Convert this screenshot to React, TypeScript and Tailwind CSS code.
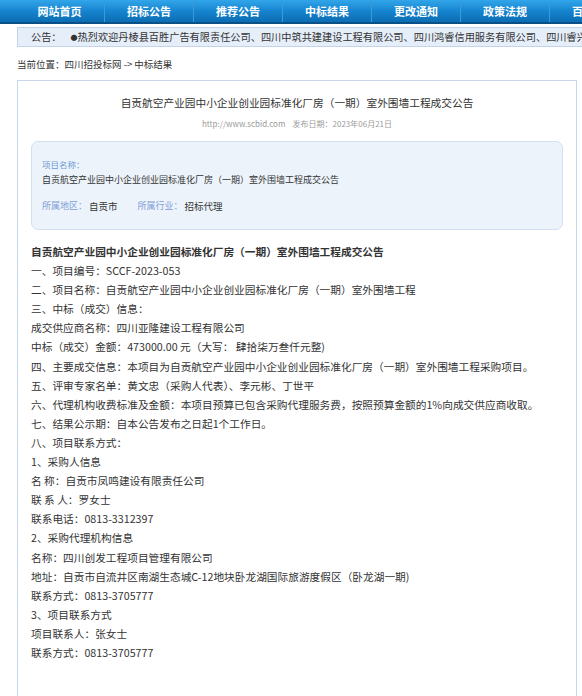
import React from "react";

const navItems = ["网站首页", "招标公告", "推荐公告", "中标结果", "更改通知", "政策法规", "百科知识"];

const body: { t: string; b?: boolean }[] = [
  { t: "自贡航空产业园中小企业创业园标准化厂房（一期）室外围墙工程成交公告", b: true },
  { t: "一、项目编号：SCCF-2023-053" },
  { t: "二、项目名称：自贡航空产业园中小企业创业园标准化厂房（一期）室外围墙工程" },
  { t: "三、中标（成交）信息：" },
  { t: "成交供应商名称：四川亚隆建设工程有限公司" },
  { t: "中标（成交）金额：473000.00 元（大写： 肆拾柒万叁仟元整)" },
  { t: "四、主要成交信息：本项目为自贡航空产业园中小企业创业园标准化厂房（一期）室外围墙工程采购项目。" },
  { t: "五、评审专家名单：黄文忠（采购人代表）、李元彬、丁世平" },
  { t: "六、代理机构收费标准及金额：本项目预算已包含采购代理服务费，按照预算金额的1%向成交供应商收取。" },
  { t: "七、结果公示期：自本公告发布之日起1个工作日。" },
  { t: "八、项目联系方式：" },
  { t: "1、采购人信息" },
  { t: "名 称：自贡市凤鸣建设有限责任公司" },
  { t: "联 系 人：罗女士" },
  { t: "联系电话：0813-3312397" },
  { t: "2、采购代理机构信息" },
  { t: "名称：四川创发工程项目管理有限公司" },
  { t: "地址：自贡市自流井区南湖生态城C-12地块卧龙湖国际旅游度假区（卧龙湖一期)" },
  { t: "联系方式：0813-3705777" },
  { t: "3、项目联系方式" },
  { t: "项目联系人：张女士" },
  { t: "联系方式：0813-3705777" },
];

export default function App() {
  return (
    <div
      className="w-[582px] h-[696px] overflow-hidden bg-white text-[#333]"
      style={{ fontFamily: '"Noto Sans CJK SC", "Noto Sans", sans-serif' }}
    >
      {/* nav */}
      <div className="h-[24px] w-full bg-gradient-to-b from-[#32a6ea] via-[#1684cf] to-[#0b6db3] border-b-[2px] border-[#0a4f85] flex pl-[15px] overflow-hidden">
        {navItems.map((n, i) => (
          <div
            key={n}
            className={`shrink-0 w-[89px] h-full flex items-center justify-center text-white font-bold text-[11px] leading-none ${
              i > 0 ? "border-l border-l-[#3b9ad8]" : ""
            }`}
          >
            {n}
          </div>
        ))}
      </div>

      {/* announcement */}
      <div className="mt-[3px] ml-[17px] h-[20px] bg-[#e5eef9] border border-[#c3d4ea] border-r-0 flex items-center pl-[13px] text-[10.2px] whitespace-nowrap overflow-hidden">
        <span>公告：</span>
        <span className="ml-[9px] text-[7px]">●</span>
        <span>热烈欢迎丹棱县百胜广告有限责任公司、四川中筑共建建设工程有限公司、四川鸿睿信用服务有限公司、四川睿兴乾达建设工程有限公司</span>
      </div>

      {/* breadcrumb */}
      <div className="ml-[17px] mt-[10px] h-[14px] text-[9.5px] leading-[14px] whitespace-nowrap">
        当前位置：四川招投标网 -&gt; 中标结果
      </div>

      {/* main box */}
      <div className="ml-[17px] mt-[9px] w-[560px] h-[620px] border border-[#c8d6ea] border-b-0">
        <div className="pt-[12px] text-center text-[10.7px] leading-[20px]">
          自贡航空产业园中小企业创业园标准化厂房（一期）室外围墙工程成交公告
        </div>
        <div className="mt-[4px] text-center text-[8px] leading-[14px] text-[#9a9a9a]">
          http://www.scbid.com&nbsp;&nbsp;&nbsp;&nbsp;发布日期：2023年06月21日
        </div>

        <div className="mx-[13px] mt-[10px] h-[89px] w-[532px] rounded-[7px] border border-[#d2e0f1] bg-[#edf3fb] px-[10px] pt-[15px]">
          <div className="text-[8.5px] leading-[14px] text-[#6e9bd3]">项目名称：</div>
          <div className="mt-[1px] text-[9px] leading-[16px]">
            自贡航空产业园中小企业创业园标准化厂房（一期）室外围墙工程成交公告
          </div>
          <div className="mt-[10px] text-[9px] leading-[16px] flex">
            <span className="text-[#7d9fd6]">所属地区：</span>
            <span className="ml-[2px] text-[9.5px]">自贡市</span>
            <span className="ml-[20px] text-[#7d9fd6]">所属行业：</span>
            <span className="ml-[2px] text-[9.5px]">招标代理</span>
          </div>
        </div>

        <div className="mx-[13px] mt-[12px] text-[10.7px] leading-[19.1px] whitespace-nowrap">
          {body.map((l, i) => (
            <div key={i} className={l.b ? "font-bold" : ""}>
              {l.t}
            </div>
          ))}
        </div>
      </div>
    </div>
  );
}
